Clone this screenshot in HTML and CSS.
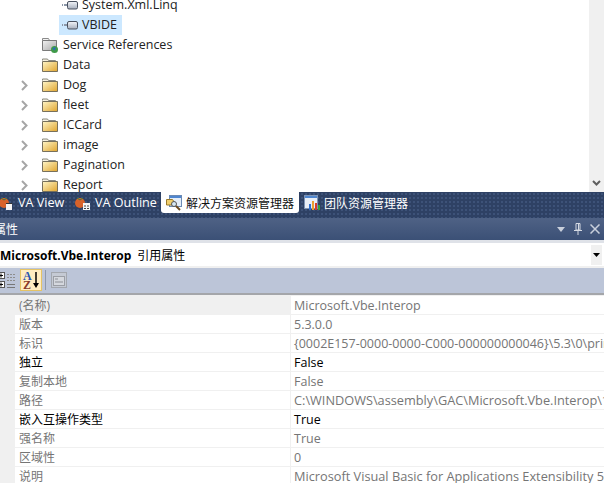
FILE: index.html
```html
<!DOCTYPE html>
<html lang="zh">
<head>
<meta charset="utf-8">
<title>属性</title>
<link rel="stylesheet" href="styles.css">
</head>
<body>
<svg class="defs" aria-hidden="true">
  <defs>
    <linearGradient id="fold" x1="0" y1="0" x2="1" y2="1"><stop offset="0" stop-color="#fff6c8"/><stop offset="1" stop-color="#e0a42c"/></linearGradient>
    <linearGradient id="refg" x1="0" y1="0" x2="0" y2="1"><stop offset="0" stop-color="#f4f6fa"/><stop offset="1" stop-color="#a6afbd"/></linearGradient>
    <linearGradient id="svcg" x1="0" y1="0" x2="1" y2="1"><stop offset="0" stop-color="#f2f2f2"/><stop offset="1" stop-color="#a8a8a8"/></linearGradient>
    <symbol id="folder" viewBox="0 0 16 16">
      <path d="M.5 3.500V2h5l1 1.500h7V5" fill="#f5efd8" stroke="#8a8a82"/>
      <path d="M.5 4.500h15v10H.5z" fill="url(#fold)" stroke="#77705c"/>
    </symbol>
    <symbol id="ref" viewBox="0 0 16 12">
      <path d="M0 6h1M2 6h3" stroke="#8b97a8" stroke-width="2"/>
      <rect x="5.500" y="2.500" width="10" height="7.500" rx="1.500" fill="url(#refg)" stroke="#4a5260"/>
    </symbol>
    <symbol id="svc" viewBox="0 0 16 16">
      <path d="M.5 3.500V1.500h6l1 2h7V10" fill="#f2f2f2" stroke="#8a8a8a"/>
      <path d="M.5 3.500h14v10H.5z" fill="url(#svcg)" stroke="#7a7a7a"/>
      <circle cx="12.500" cy="12.500" r="3.500" fill="#3f9a48"/>
      <path d="M10.500 11.500l2-1.500 1.500 1-1.500 2.500-1-.5z" fill="#2a6fb5"/>
    </symbol>
    <symbol id="chev" viewBox="0 0 7 11">
      <path d="M1 1l4.500 4.500L1 10" fill="none" stroke="#a6a6a6" stroke-width="2"/>
    </symbol>
  </defs>
</svg>

<section class="tree">
  <div class="tree-inner">
    <div class="row lvl2"><svg class="ic-ref"><use href="#ref"/></svg><span class="lbl">System.Xml.Linq</span></div>
    <div class="row lvl2"><span class="sel"><svg class="ic-ref"><use href="#ref"/></svg><span class="lbl">VBIDE</span></span></div>
    <div class="row lvl1"><svg class="ic"><use href="#svc"/></svg><span class="lbl">Service References</span></div>
    <div class="row lvl1"><svg class="ic"><use href="#folder"/></svg><span class="lbl">Data</span></div>
    <div class="row"><svg class="exp"><use href="#chev"/></svg><svg class="ic"><use href="#folder"/></svg><span class="lbl">Dog</span></div>
    <div class="row"><svg class="exp"><use href="#chev"/></svg><svg class="ic"><use href="#folder"/></svg><span class="lbl">fleet</span></div>
    <div class="row"><svg class="exp"><use href="#chev"/></svg><svg class="ic"><use href="#folder"/></svg><span class="lbl">ICCard</span></div>
    <div class="row"><svg class="exp"><use href="#chev"/></svg><svg class="ic"><use href="#folder"/></svg><span class="lbl">image</span></div>
    <div class="row"><svg class="exp"><use href="#chev"/></svg><svg class="ic"><use href="#folder"/></svg><span class="lbl">Pagination</span></div>
    <div class="row"><svg class="exp"><use href="#chev"/></svg><svg class="ic"><use href="#folder"/></svg><span class="lbl">Report</span></div>
  </div>
  <div class="vscroll">
    <svg class="vchev" viewBox="0 0 9 7"><path d="M1 1l3.500 3.500L8 1" fill="none" stroke="#5f5f5f" stroke-width="2"/></svg>
  </div>
</section>

<nav class="tabs">
  <div class="tab first">
    <svg class="tab-ic" viewBox="0 0 16 16"><circle cx="8" cy="8" r="5" fill="#d8622a"/><path d="M5 3l3 2 3-2" fill="none" stroke="#3c7a3a"/><rect x="10" y="8" width="6" height="7" fill="#f4f4f4"/><path d="M10 8.500h6" stroke="#333"/></svg>
    <span class="lat">VA View</span>
  </div>
  <div class="tab second">
    <svg class="tab-ic" viewBox="0 0 16 16"><circle cx="5" cy="8" r="5" fill="#d8622a"/><path d="M2 3l3 2 3-2" fill="none" stroke="#3c7a3a"/><rect x="8" y="8" width="7" height="7" fill="#f4f4f4"/><path d="M9 11h2M12 11h2M9 13.500h2M12 13.500h2" stroke="#444"/></svg>
    <span class="lat">VA Outline</span>
  </div>
  <div class="tab active">
    <svg class="tab-ic" viewBox="0 0 16 16"><rect x="3.500" y=".5" width="12" height="11" fill="#e4edf8" stroke="#6b8ab5"/><rect x="4" y="1" width="11" height="2" fill="#4f86cf"/><path d="M.5 4.500h6l1 1.500v4H.5z" fill="#f1cf6e" stroke="#9a7a2a"/><circle cx="8" cy="9" r="2.500" fill="#d7e9f5" stroke="#555"/><path d="M10 11l4 4" stroke="#6c4a1f" stroke-width="2"/></svg>
    <span>解决方案资源管理器</span>
  </div>
  <div class="tab team">
    <svg class="tab-ic" viewBox="0 0 16 16"><rect x=".5" y=".5" width="13" height="13" fill="#e8eef6" stroke="#7d94b5"/><rect x="1" y="1" width="12" height="2" fill="#4f86cf"/><path d="M5 15V9h2v6z" fill="#2d6fd0"/><path d="M8 15V6h2v9z" fill="#e8a030"/><path d="M11 15V8h2v7z" fill="#d63c2c"/><path d="M14 15V10h2v5z" fill="#3aa03a"/></svg>
    <span>团队资源管理器</span>
  </div>
</nav>

<header class="titlebar">
  <span class="title">属性</span>
  <div class="win-btns">
    <svg class="wb-tri" viewBox="0 0 8 5"><path d="M0 0h8L4 5z" fill="#c9d0dc"/></svg>
    <svg class="wb-pin" viewBox="0 0 8 12"><path d="M2 .5h4V7H2zM0 7.500h8M4 8v4M4.500 1v6" fill="none" stroke="#d5dae3"/></svg>
    <svg class="wb-x" viewBox="0 0 10 10"><path d="M.5.5l9 9M9.500.5l-9 9" stroke="#c9d0dc" stroke-width="1.500"/></svg>
  </div>
</header>

<div class="select-wrap">
  <div class="select">
    <span class="sel-text"><b class="sel-bold">Microsoft.Vbe.Interop</b>引用属性</span>
    <span class="sel-btn"><svg class="sel-tri" viewBox="0 0 7 4"><path d="M0 0h7L3.500 4z" fill="#000"/></svg></span>
  </div>
</div>

<div class="toolbar">
  <svg class="tb-cat" viewBox="0 0 16 22">
    <rect x="-3.500" y="3.500" width="8" height="6" fill="#fff" stroke="#555"/><path d="M-1 6.500h4M1 4.500v4" stroke="#000"/>
    <rect x="-3.500" y="12.500" width="8" height="6" fill="#fff" stroke="#555"/><path d="M-1 15.500h4M1 13.500v4" stroke="#000"/>
    <path d="M7 5.500h8M7 8.500h8M7 11.500h8" stroke="#8d8d8d" stroke-dasharray="2 1"/><path d="M7 15.500h8M7 18.500h8" stroke="#777"/>
  </svg>
  <span class="tb-az">
    <svg viewBox="0 0 20 20" class="az-svg">
      <text x="2" y="10" class="az-a">A</text>
      <text x="2" y="19" class="az-z">Z</text>
      <path d="M15 2v13" stroke="#000" stroke-width="1.500"/><path d="M12 13h6l-3 5z" fill="#000"/>
    </svg>
  </span>
  <span class="tb-sep"></span>
  <svg class="tb-page" viewBox="0 0 16 16"><rect x=".5" y=".5" width="15" height="15" fill="#c5cad4" stroke="#a3a7ae"/><rect x="2.500" y="4.500" width="11" height="9" fill="#d5d8de" stroke="#9b9ea5"/><path d="M4 7h3M4 10h8" stroke="#8d9097"/></svg>
</div>

<section class="grid">
  <div class="g-row selected"><span class="g-name dim">(名称)</span><span class="g-val dim">Microsoft.Vbe.Interop</span></div>
  <div class="g-row"><span class="g-name dim">版本</span><span class="g-val dim">5.3.0.0</span></div>
  <div class="g-row"><span class="g-name dim">标识</span><span class="g-val dim">{0002E157-0000-0000-C000-000000000046}\5.3\0\primary</span></div>
  <div class="g-row"><span class="g-name">独立</span><span class="g-val">False</span></div>
  <div class="g-row"><span class="g-name dim">复制本地</span><span class="g-val dim">False</span></div>
  <div class="g-row"><span class="g-name dim">路径</span><span class="g-val dim long">C:\WINDOWS\assembly\GAC\Microsoft.Vbe.Interop\14.0.0.0</span></div>
  <div class="g-row"><span class="g-name">嵌入互操作类型</span><span class="g-val">True</span></div>
  <div class="g-row"><span class="g-name dim">强名称</span><span class="g-val dim">True</span></div>
  <div class="g-row"><span class="g-name dim">区域性</span><span class="g-val dim">0</span></div>
  <div class="g-row"><span class="g-name dim">说明</span><span class="g-val dim long">Microsoft Visual Basic for Applications Extensibility 5.3</span></div>
</section>
</body>
</html>
```
FILE: styles.css
```css
* { box-sizing: border-box; }
html, body { margin: 0; padding: 0; }
body {
  width: 604px;
  height: 483px;
  overflow: hidden;
  background: #fff;
  font-family: "Open Sans", "Noto Sans CJK SC", sans-serif;
  font-size: 12px;
  color: #000;
}
.defs { display: block; width: 0; height: 0; }

.tree { display: flex; height: 192px; overflow: hidden; background: #fff; }
.tree-inner { flex: 1; margin-top: -5px; }
.row { display: flex; align-items: center; height: 20px; padding-left: 21px; white-space: nowrap; color: #222; }
.row.lvl1 { padding-left: 42px; }
.row.lvl2 { padding-left: 62px; }
.exp { width: 7px; height: 11px; margin-right: 14px; }
.ic { width: 16px; height: 16px; margin-right: 5px; }
.ic-ref { width: 16px; height: 12px; margin-right: 4px; }
.lbl { font-size: 12.5px; padding-bottom: 2px; }
.sel { display: flex; align-items: center; height: 20px; margin-left: -3px; padding: 0 4px 0 3px; width: 63px; background: #cce8ff; }
.vscroll { width: 15px; background: #f0f0f0; display: flex; flex-direction: column; justify-content: flex-end; align-items: center; padding-bottom: 5px; }
.vchev { width: 9px; height: 7px; }

.tabs {
  display: flex;
  align-items: flex-start;
  height: 26px;
  background-color: #2e4164;
  background-image: radial-gradient(#3d5278 1px, transparent 1px);
  background-size: 4px 4px;
  color: #fff;
}
.tab { display: flex; align-items: center; height: 21px; white-space: nowrap; }
.tab-ic { width: 16px; height: 16px; margin-right: 4px; }
.lat { font-size: 12.6px; }
.tab.first { margin-left: -4px; width: 79px; }
.tab.first .tab-ic { margin-right: 6px; }
.tab.second { width: 86px; }
.tab.active { width: 138px; padding-left: 5px; background: #fff; color: #111; border-radius: 0 0 3px 3px; }
.tab.team { margin-left: 5px; }

.titlebar {
  display: flex;
  align-items: center;
  justify-content: space-between;
  height: 22px;
  background: linear-gradient(#4f6285, #3b5076);
  color: #fff;
}
.title { margin-left: -6px; }
.win-btns { display: flex; align-items: center; margin-right: 4px; }
.wb-tri { width: 8px; height: 5px; margin-right: 9px; }
.wb-pin { width: 8px; height: 12px; margin-right: 8px; }
.wb-x { width: 10px; height: 10px; }

.select-wrap { background: #fff; border-top: 3px solid #dfe2e8; border-bottom: 2px solid #f0f0f0; height: 28px; }
.select { display: flex; align-items: center; justify-content: space-between; height: 23px; padding-right: 2px; }
.sel-text { white-space: nowrap; }
.sel-bold { margin-right: 6px; }
.sel-btn { display: flex; align-items: center; justify-content: center; width: 11px; height: 20px; background: #f0f0f0; }
.sel-tri { width: 7px; height: 4px; }

.toolbar {
  display: flex;
  align-items: center;
  height: 27px;
  background: #bcc5d8;
  border-bottom: 2px solid #a4a6aa;
  padding-bottom: 1px;
}
.tb-cat { width: 16px; height: 22px; flex: none; margin-right: 4px; }
.tb-az { display: flex; width: 22px; height: 22px; background: #ffedc0; border: 1px solid #e5c365; }
.az-svg { width: 20px; height: 20px; }
.az-a { font: bold 12px "Liberation Serif", serif; fill: #2a55b0; }
.az-z { font: bold 12px "Liberation Serif", serif; fill: #8a3a2a; }
.tb-sep { width: 1px; height: 20px; margin: 0 5px 0 3px; background: #8e98ab; }
.tb-page { width: 16px; height: 16px; }

.grid { background: #f0f0f0; padding-top: 1px; }
.g-row { display: grid; grid-template-columns: 291px 1fr; height: 19px; white-space: nowrap; overflow: hidden; }
.g-name, .g-val { display: flex; align-items: center; background: #fff; border-bottom: 1px solid #f0f0f0; }
.g-name { margin-left: 15px; padding-left: 4px; border-right: 1px solid #f0f0f0; }
.g-val { padding-left: 3px; font-size: 12.5px; }
.g-val.long { font-size: 12.75px; }
.dim { color: #757575; }
.selected .g-name { background: #f0f0f0; margin-left: 0; padding-left: 19px; }
```
